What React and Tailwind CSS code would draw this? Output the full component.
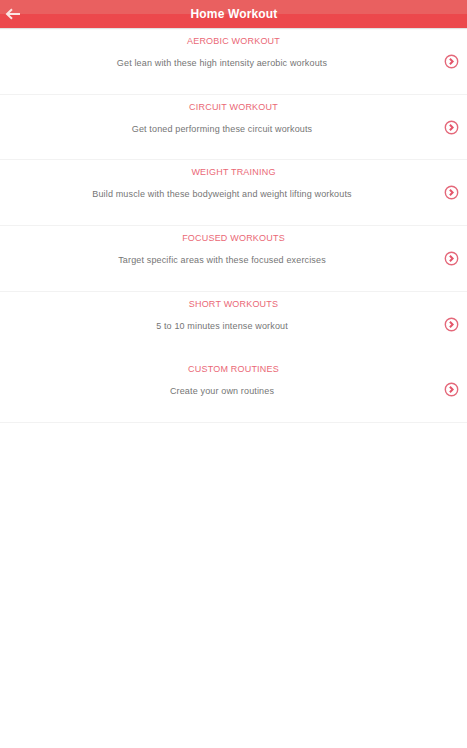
import React from "react";

const rows = [
  ["AEROBIC WORKOUT", "Get lean with these high intensity aerobic workouts", "border-t border-transparent"],
  ["CIRCUIT WORKOUT", "Get toned performing these circuit workouts", "border-t border-[#f2f2f2]"],
  ["WEIGHT TRAINING", "Build muscle with these bodyweight and weight lifting workouts", "border-t border-[#f2f2f2]"],
  ["FOCUSED WORKOUTS", "Target specific areas with these focused exercises", "border-t border-[#f2f2f2]"],
  ["SHORT WORKOUTS", "5 to 10 minutes intense workout", "border-t border-[#f2f2f2]"],
  ["CUSTOM ROUTINES", "Create your own routines", "border-t border-transparent"],
];

function Chevron() {
  return (
    <svg width="15" height="15" viewBox="0 0 15 15" fill="none" className="shrink-0">
      <circle cx="7.5" cy="7.5" r="6.2" stroke="#e4687a" strokeWidth="1.4" />
      <path d="M5.9 4.8 L8.6 7.5 L5.9 10.2" stroke="#e4556a" strokeWidth="2" />
    </svg>
  );
}

export default function App() {
  return (
    <div className="w-[467px] h-[748px] bg-white overflow-hidden font-['Liberation_Sans',Arial,sans-serif]">
      <header className="relative h-[28px] flex items-center justify-center pl-[1px] bg-gradient-to-b from-[#e96060] from-50% to-[#ec484c] to-50% shadow-[0_1px_1px_rgba(0,0,0,0.12)]">
        <svg width="15" height="12" viewBox="0 0 15 12" fill="none" className="absolute left-[5px] top-[8px]">
          <path d="M15 6H2M7 1.2L2 6l5 4.8" stroke="#fbe6e4" strokeWidth="2" />
        </svg>
        <h1 className="text-[12px] font-bold tracking-[0.15px] text-white">Home Workout</h1>
      </header>
      <main className="pt-[0.3px] border-b border-[#f2f2f2] h-[395px]">
        {rows.map(([title, desc, cls]) => (
          <div key={title} className={`relative h-[65.6px] flex flex-col items-center pt-[6px] ${cls}`}>
            <div className="text-[9px] leading-[12px] tracking-[0.2px] text-[#ea6876]">{title}</div>
            <div className="mt-[10px] mr-[23px] text-[9px] leading-[12px] tracking-[0.15px] text-[#757575]">{desc}</div>
            <div className="absolute right-[8px] top-[25px]">
              <Chevron />
            </div>
          </div>
        ))}
      </main>
    </div>
  );
}
